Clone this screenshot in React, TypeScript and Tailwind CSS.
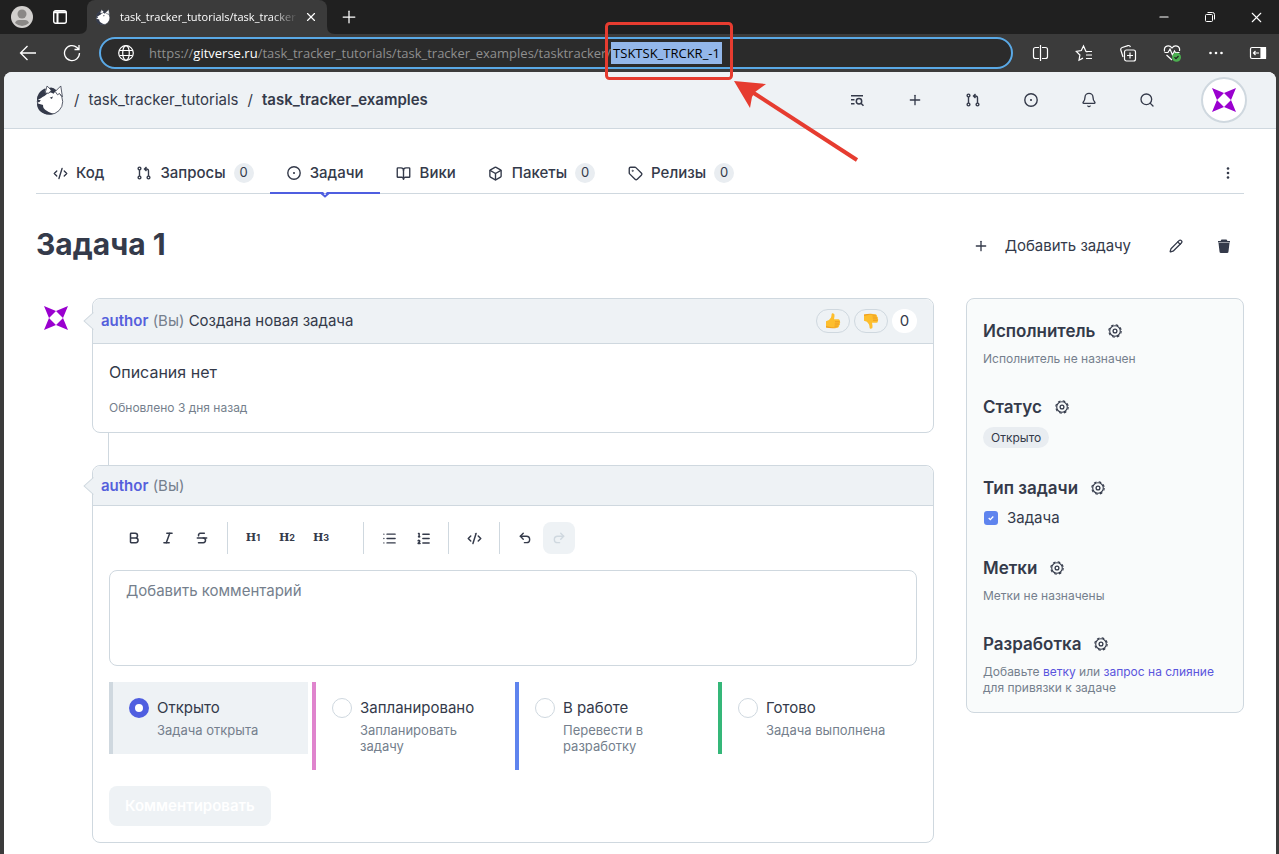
import React from 'react';
import {
  Bell,
  Bold,
  BookOpen,
  Box,
  CodeXml,
  Italic,
  List,
  ListOrdered,
  Minus,
  Pencil,
  Plus,
  Redo2,
  Search,
  Strikethrough,
  Tag,
  Undo2,
  X,
} from 'lucide-react';

const HuskyLogo: React.FC<{ className?: string }> = ({ className }) => (
  <svg viewBox="0 0 84 92" className={className} aria-hidden="true">
    <circle cx="42" cy="51" r="39" fill="#fff" stroke="#343a4a" strokeWidth="2.5" />
    <path d="M28 10C10 18 2 31 2 47l12-6c6-6 16-8 22-17l-10-2z" fill="#343a4a" />
    <path d="M38 9q13-5 23 7l-8 11q-7-6-15-5z" fill="#343a4a" />
    <path d="M27 25 33 3l13 13-7 9z" fill="#fff" stroke="#343a4a" strokeWidth="2.5" />
    <path d="M58 20 75 3l5 33-9-10-6 4z" fill="#fff" stroke="#343a4a" strokeWidth="2.5" />
    <path d="M2 56l19 5q-2 9 6 15 10 8 26 13C26 96 2 82 2 56z" fill="#343a4a" />
    <path d="M3 45l11 2-5 6H3z" fill="#343a4a" />
    <path d="M41 39l10-4-3 8z" fill="#343a4a" />
  </svg>
);

const Star: React.FC = () => (
  <svg viewBox="0 0 24 24" className="size-6" fill="#9a00cf" aria-hidden="true">
    <path d="M0 0 12 5 5 12zM24 0 12 5l7 7zM0 24l12-5-7-7zM24 24 12 19l7-7z" />
  </svg>
);

const RequestIcon: React.FC = () => (
  <svg viewBox="0 0 16 16" className="size-4" fill="none" stroke="currentColor" strokeWidth="1.4" aria-hidden="true">
    <circle cx="3.5" cy="3.5" r="1.4" />
    <circle cx="3.5" cy="12.5" r="1.4" />
    <circle cx="12.5" cy="12.5" r="1.4" />
    <path d="M3.5 5v6M12.5 11V6a2 2 0 0 0-2-2H8.5M10.5 2l-2 2 2 2" />
  </svg>
);

const IssueIcon: React.FC = () => (
  <svg viewBox="0 0 16 16" className="size-4" fill="none" stroke="currentColor" strokeWidth="1.4" aria-hidden="true">
    <circle cx="8" cy="8" r="6.2" />
    <circle cx="8" cy="8" r="1.1" fill="currentColor" stroke="none" />
  </svg>
);

const GearIcon: React.FC = () => (
  <svg viewBox="0 0 16 16" className="size-4" fill="none" stroke="currentColor" aria-hidden="true">
    <circle cx="8" cy="8" r="5.3" strokeWidth="1.1" />
    <circle cx="8" cy="8" r="6.2" strokeWidth="1.1" strokeDasharray="2.6 2.27" />
    <circle cx="8" cy="8" r="1.9" strokeWidth="1.3" />
  </svg>
);

const ListSearchIcon: React.FC = () => (
  <svg viewBox="0 0 16 16" className="size-4" fill="none" stroke="currentColor" strokeWidth="1.5" aria-hidden="true">
    <path d="M2 3.7h12M2 7.8h3.5M2 11.8h3.5" />
    <circle cx="10" cy="9.3" r="2.7" />
    <path d="m12 11.3 2.5 2.5" />
  </svg>
);

const Thumb: React.FC<{ down?: boolean }> = ({ down }) => (
  <svg viewBox="0 0 16 16" className={down ? 'size-4 rotate-180 -scale-x-100' : 'size-4'} aria-hidden="true">
    <path d="M1 8.2q3.4-.4 4.9-3.4Q6.6 3 6.6 1.3 6.8 0 8 .3q2 .5 1.5 3L9 6.2h4.6q1.7.3 1.2 1.9.9 1.1 0 2.3.5 1.3-.7 2.2 0 1.7-1.5 2.1-5 1-11.6-.5z" fill="#fdbe2d" />
    <path d="M10 8.8h4.7M9.8 11h4.3M9.5 13.1h3.4" stroke="#e38b1c" strokeWidth=".7" fill="none" />
    <path d="M1 13q5 1.500 11.500 1.700Q7 16 1 14.500z" fill="#f0a020" />
  </svg>
);

const browserActions = [
  {
    name: 'Split screen',
    icon: (
      <path d="M8 3.5H4.5a2 2 0 0 0-2 2v7a2 2 0 0 0 2 2H8M11 3.5h3.5a2 2 0 0 1 2 2v7a2 2 0 0 1-2 2H11M9.5 1v16" />
    ),
  },
  {
    name: 'Favorites',
    icon: <path d="M12.5 8 11 7.500 8.500 2 6.300 6.500l-5 .8 3.600 3.700-.9 5.200 4-2.100M11.500 7.500H17M11 11h6M11 14.500h6" />,
  },
  {
    name: 'Collections',
    icon: (
      <path d="M4 13 1.800 6a2 2 0 0 1 1.400-2.500L9 1.600a2 2 0 0 1 2.400 1.400M7.500 6h7a2 2 0 0 1 2 2v7a2 2 0 0 1-2 2h-7a2 2 0 0 1-2-2V8a2 2 0 0 1 2-2zM11 8.500v6M8 11.500h6" />
    ),
  },
  {
    name: 'Browser essentials',
    icon: (
      <>
        <path d="M1.500 7.500C.5 1.500 6.500.5 9 4c2.500-3.500 8.500-2.500 7.500 3M1.500 8.500H5L7 5l2.500 6 2-4 1 1.500h4M3.500 11 9 16" />
        <circle cx="13.5" cy="13.2" r="4.5" fill="#4caf50" stroke="none" />
        <path d="m11.500 13.300 1.500 1.400 2.500-2.700" stroke="#202020" />
      </>
    ),
  },
  {
    name: 'Settings and more',
    icon: (
      <g fill="currentColor" stroke="none">
        <circle cx="3.5" cy="9" r="1.3" />
        <circle cx="9" cy="9" r="1.3" />
        <circle cx="14.5" cy="9" r="1.3" />
      </g>
    ),
  },
  {
    name: 'Hide sidebar',
    icon: (
      <>
        <rect x="1.5" y="3.5" width="15" height="11" rx="1.5" />
        <path d="M12 3.5h4.5v11H12z" fill="currentColor" />
        <path d="M10 9H4.500M6.500 7l-2 2 2 2" />
      </>
    ),
  },
];

const tabs = [
  { title: 'Код', icon: <CodeXml size={15} strokeWidth={2.2} /> },
  { title: 'Запросы', icon: <RequestIcon />, count: 0 },
  { title: 'Задачи', icon: <IssueIcon />, active: true },
  { title: 'Вики', icon: <BookOpen size={15} strokeWidth={2.2} /> },
  { title: 'Пакеты', icon: <Box size={15} strokeWidth={2.2} />, count: 0 },
  { title: 'Релизы', icon: <Tag size={15} strokeWidth={2.2} />, count: 0 },
];

const headerActions = [
  { name: 'Список', icon: <ListSearchIcon /> },
  { name: 'Создать', icon: <Plus size={16} /> },
  { name: 'Запросы', icon: <RequestIcon /> },
  { name: 'Задачи', icon: <IssueIcon /> },
  { name: 'Уведомления', icon: <Bell size={16} /> },
  { name: 'Поиск', icon: <Search size={16} /> },
];

const statuses = [
  { title: 'Открыто', text: 'Задача открыта', style: 'border-[#cfd8df] bg-[#eef2f5]', checked: true },
  { title: 'Запланировано', text: 'Запланировать задачу', style: 'border-[#df84cd]' },
  { title: 'В работе', text: 'Перевести в разработку', style: 'border-[#5f84ee]' },
  { title: 'Готово', text: 'Задача выполнена', style: 'border-[#35b779]' },
];

const BrowserBar: React.FC = () => (
  <div className="text-white">
    <div className="flex h-[34px] items-center bg-[#202020]">
      <button className="ml-[11px]" aria-label="Profile">
        <svg viewBox="0 0 22 22" className="size-[22px]">
          <circle cx="11" cy="11" r="11" fill="#d2d0ce" />
          <circle cx="11" cy="8" r="4.5" fill="#8a8886" />
          <path d="M4 17q1-3 4-3h6q3 0 4 3-7 6-14 0z" fill="#8a8886" />
        </svg>
      </button>
      <button className="ml-5" aria-label="Tab actions">
        <svg viewBox="0 0 14 14" className="size-[14px]" fill="none" stroke="currentColor" strokeWidth="1.4">
          <rect x=".7" y=".7" width="12.6" height="12.6" rx="2" />
          <path d="M1 2.300h12M4.500 3v10" strokeWidth="2" />
        </svg>
      </button>
      <svg viewBox="0 0 8 8" className="ml-3 size-2 self-end" fill="#3b3b3b">
        <path d="M8 0v8H0q8 0 8-8z" />
      </svg>
      <div className="flex h-full w-[240px] items-center rounded-t-lg bg-[#3b3b3b] px-2">
        <HuskyLogo className="size-4" />
        <span className="ml-[9px] w-[178px] whitespace-nowrap font-['Open_Sans'] text-[11px] mask-r-from-85%">
          task_tracker_tutorials/task_tracker
        </span>
        <button className="ml-[6px]" aria-label="Close tab">
          <X size={14} strokeWidth={2} />
        </button>
      </div>
      <svg viewBox="0 0 8 8" className="size-2 self-end" fill="#3b3b3b">
        <path d="M0 0v8h8Q0 8 0 0z" />
      </svg>
      <button className="ml-1" aria-label="New tab">
        <Plus size={20} strokeWidth={1.5} />
      </button>
      <div className="ml-auto flex items-center">
        <button className="flex w-[46px] justify-center" aria-label="Minimize">
          <Minus size={14} strokeWidth={2} />
        </button>
        <button className="flex w-[46px] justify-center" aria-label="Restore">
          <svg viewBox="0 0 10 10" className="size-[10px]" fill="none" stroke="currentColor">
            <rect x=".5" y="2.5" width="7" height="7" rx="1" />
            <path d="M2.500.5h5a2 2 0 0 1 2 2v5" />
          </svg>
        </button>
        <button className="flex w-[46px] justify-center" aria-label="Close">
          <X size={17} strokeWidth={1.5} />
        </button>
      </div>
    </div>

    <div className="flex h-[38px] items-center bg-[#3b3b3b]">
      <button className="ml-[19px]" aria-label="Back">
        <svg viewBox="0 0 18 18" className="size-[18px]" fill="none" stroke="currentColor" strokeWidth="1.3">
          <path d="M17 9H1.500M8.500 2l-7 7 7 7" />
        </svg>
      </button>
      <button className="ml-[26px]" aria-label="Reload">
        <svg viewBox="0 0 18 18" className="size-[18px]" fill="none" stroke="currentColor" strokeWidth="1.3">
          <path d="M16.500 9A7.500 7.500 0 1 1 14 3.500l1.500 1.500M16 1v4.500h-4.500" />
        </svg>
      </button>
      <div className="ml-[18px] flex h-8 flex-1 items-center rounded-full border-2 border-[#5aa9e6] bg-[#2b2b2b]">
        <svg viewBox="0 0 16 16" className="ml-[17px] size-4" fill="none" stroke="currentColor" strokeWidth="1.2">
          <circle cx="8" cy="8" r="7.3" />
          <ellipse cx="8" cy="8" rx="3.3" ry="7.3" />
          <path d="M1.500 5.500h13M1.500 10.500h13" />
        </svg>
        <div className="ml-[15px] whitespace-nowrap font-['Open_Sans'] text-[13px] leading-[22px] text-[#8f8f8f]" role="textbox" aria-label="Address">
          https://<span className="text-white">gitverse.ru</span>
          /task_tracker_tutorials/task_tracker_examples/tasktracker/
          <span className="inline-block bg-[#93b7ea] px-[2px] text-black">TSKTSK_TRCKR_-1</span>
        </div>
      </div>
      <div className="ml-[5px] flex">
        {browserActions.map((action) => (
          <button key={action.name} className="flex w-11 justify-center last:w-[39px]" aria-label={action.name}>
            <svg viewBox="0 0 18 18" className="size-[18px]" fill="none" stroke="currentColor" strokeWidth="1.2">
              {action.icon}
            </svg>
          </button>
        ))}
      </div>
      <span className="w-[2px]" />
    </div>
  </div>
);

const RepoHeader: React.FC = () => (
  <header className="flex h-[57px] items-center border-b border-[#cfd8df] bg-[#eef2f5] pl-8 pr-[29px]">
    <HuskyLogo className="h-[30px] w-7" />
    <div className="ml-[10px] flex gap-[9px] text-[15px]">
      <span>/</span>
      <a href="#owner">task_tracker_tutorials</a>
      <span>/</span>
      <a href="#repo" className="font-semibold">task_tracker_examples</a>
    </div>
    <div className="ml-auto flex">
      {headerActions.map((action) => (
        <button key={action.name} className="flex w-[58px] justify-center" aria-label={action.name}>
          {action.icon}
        </button>
      ))}
    </div>
    <button className="ml-[25px] flex size-[46px] items-center justify-center rounded-full border-2 border-[#cfd8df] bg-white" aria-label="Профиль">
      <Star />
    </button>
  </header>
);

const RepoTabs: React.FC = () => (
  <nav className="flex h-[65px] items-end border-b border-[#cfd8df]">
    {tabs.map((tab) => (
      <a key={tab.title} href="#tab" className="relative -mb-px flex h-[43px] items-center gap-2 px-4 pt-px text-[15px] font-medium">
        <span className="flex size-4 items-center justify-center">{tab.icon}</span>
        {tab.title}
        {tab.count !== undefined && (
          <span className="flex size-5 items-center justify-center rounded-full bg-[#e9edf1] text-[13px] font-normal">{tab.count}</span>
        )}
        {tab.active && (
          <span className="absolute inset-x-0 bottom-0 h-[2px] bg-[#4f5ee0]">
            <svg viewBox="0 0 12 6" className="absolute left-1/2 top-0 h-[6px] w-3 -translate-x-1/2">
              <path d="M1 0h10L8 0 6 2 4 0z" fill="#fff" />
              <path d="M0 1h2l4 3.500L10 1h2" fill="none" stroke="#4f5ee0" strokeWidth="2" />
            </svg>
          </span>
        )}
      </a>
    ))}
    <button className="mb-3 ml-auto mr-2 flex size-4 items-center justify-center" aria-label="Ещё">
      <svg viewBox="0 0 16 16" className="size-4" fill="currentColor">
        <circle cx="8" cy="3.5" r="1.3" />
        <circle cx="8" cy="8" r="1.3" />
        <circle cx="8" cy="12.5" r="1.3" />
      </svg>
    </button>
  </nav>
);

const CardPointer: React.FC = () => (
  <svg viewBox="0 0 10 18" className="absolute -left-[10px] top-1/2 h-[18px] w-[11px] -translate-y-1/2" preserveAspectRatio="none">
    <path d="M10 0 1 9l9 9z" fill="#eef2f5" />
    <path d="M9.500.5 1 9l8.500 8.500" fill="none" stroke="#cfd8df" />
  </svg>
);

const ToolButton: React.FC<{ name: string; disabled?: boolean; children: React.ReactNode }> = ({ name, disabled, children }) => (
  <button
    aria-label={name}
    disabled={disabled}
    className="flex size-8 items-center justify-center rounded-lg disabled:bg-[#eef2f5] disabled:text-[#cfd8df]"
  >
    {children}
  </button>
);

const HeadingMark: React.FC<{ level: number }> = ({ level }) => (
  <span className="flex items-baseline font-['DejaVu_Serif'] text-[11px] leading-4 font-bold">
    H<span className="font-['Inter'] text-[9px]">{level}</span>
  </span>
);

const Toolbar: React.FC = () => (
  <div className="flex">
    <div className="flex gap-[2px] border-r border-[#cfd8df] px-[9px]">
      <ToolButton name="Жирный"><Bold size={14} strokeWidth={2.6} /></ToolButton>
      <ToolButton name="Курсив"><Italic size={14} strokeWidth={2.6} /></ToolButton>
      <ToolButton name="Зачёркнутый"><Strikethrough size={14} strokeWidth={2.6} /></ToolButton>
    </div>
    <div className="flex gap-[2px] border-r border-[#cfd8df] pl-[9px] pr-[26px]">
      <ToolButton name="Заголовок первого уровня"><HeadingMark level={1} /></ToolButton>
      <ToolButton name="Заголовок второго уровня"><HeadingMark level={2} /></ToolButton>
      <ToolButton name="Заголовок третьего уровня"><HeadingMark level={3} /></ToolButton>
    </div>
    <div className="flex gap-[2px] border-r border-[#cfd8df] px-[9px]">
      <ToolButton name="Список"><List size={15} strokeWidth={2.2} /></ToolButton>
      <ToolButton name="Нумерованный список"><ListOrdered size={15} strokeWidth={2.4} /></ToolButton>
    </div>
    <div className="flex border-r border-[#cfd8df] px-[9px]">
      <ToolButton name="Код"><CodeXml size={15} strokeWidth={2.4} /></ToolButton>
    </div>
    <div className="flex gap-[2px] px-[9px]">
      <ToolButton name="Отменить"><Undo2 size={14} strokeWidth={2.4} /></ToolButton>
      <ToolButton name="Повторить" disabled><Redo2 size={14} strokeWidth={2.4} /></ToolButton>
    </div>
  </div>
);

const SideSection: React.FC<{ title: string; children: React.ReactNode }> = ({ title, children }) => (
  <section className="flex flex-col items-start gap-2 text-xs leading-4 text-[#757f8d]">
    <h2 className="flex items-center gap-3 text-[17px] leading-6 font-semibold text-[#343a4a]">
      {title}
      <button aria-label={`Изменить: ${title}`}><GearIcon /></button>
    </h2>
    {children}
  </section>
);

const Sidebar: React.FC = () => (
  <aside className="flex w-[278px] shrink-0 flex-col gap-7 self-start rounded-lg border border-[#cfd8df] bg-[#f9fbfb] px-4 pb-4 pt-5">
    <SideSection title="Исполнитель">
      <p>Исполнитель не назначен</p>
    </SideSection>
    <SideSection title="Статус">
      <span className="rounded-full bg-[#e9edf1] px-2 leading-[21px] text-[#343a4a]">Открыто</span>
    </SideSection>
    <SideSection title="Тип задачи">
      <label className="flex items-center gap-[9px] pl-px text-[15px] leading-5 text-[#343a4a]">
        <span className="grid">
          <input type="checkbox" defaultChecked className="col-start-1 row-start-1 size-[14px] appearance-none rounded-[3px] bg-[#5f84ee]" />
          <svg viewBox="0 0 14 14" className="pointer-events-none col-start-1 row-start-1 size-[14px]" fill="none" stroke="#fff" strokeWidth="1.3">
            <path d="m4.700 7 1.600 1.600 3-3.100" />
          </svg>
        </span>
        Задача
      </label>
    </SideSection>
    <SideSection title="Метки">
      <p>Метки не назначены</p>
    </SideSection>
    <SideSection title="Разработка">
      <p>
        Добавьте <a href="#branch" className="text-[#5a55dd]">ветку</a> или{' '}
        <a href="#merge" className="text-[#5a55dd]">запрос на слияние</a>
        <br />
        для привязки к задаче
      </p>
    </SideSection>
  </aside>
);

const Author: React.FC = () => (
  <>
    <a href="#author" className="font-semibold text-[#5560dc]">author</a>{' '}
    <span className="text-[#757f8d]">(Вы)</span>
  </>
);

const Thread: React.FC = () => (
  <div className="min-w-0 flex-1">
    <article className="rounded-lg border border-[#cfd8df]">
      <div className="relative flex h-[45px] items-center rounded-t-lg border-b border-[#cfd8df] bg-[#eef2f5] pl-2 pr-4">
        <CardPointer />
        <p><Author /> Создана новая задача</p>
        <div className="ml-auto flex gap-1">
          <button className="flex h-6 w-[34px] items-center justify-center rounded-full border border-[#cfd8df]" aria-label="Нравится">
            <Thumb />
          </button>
          <button className="flex h-6 w-[34px] items-center justify-center rounded-full border border-[#cfd8df]" aria-label="Не нравится">
            <Thumb down />
          </button>
          <span className="flex h-6 w-[25px] items-center justify-center rounded-full bg-white">0</span>
        </div>
      </div>
      <div className="p-4">
        <p className="text-base leading-6">Описания нет</p>
        <p className="mt-4 text-xs leading-4 text-[#757f8d]">Обновлено 3 дня назад</p>
      </div>
    </article>

    <div className="ml-4 h-8 border-l border-[#cfd8df]" />

    <form className="rounded-lg border border-[#cfd8df]" onSubmit={(e) => e.preventDefault()}>
      <div className="relative flex h-10 items-center rounded-t-lg border-b border-[#cfd8df] bg-[#eef2f5] px-2 pt-[2px]">
        <CardPointer />
        <p><Author /></p>
      </div>
      <div className="flex flex-col gap-4 p-4">
        <Toolbar />
        <textarea
          aria-label="Комментарий"
          placeholder="Добавить комментарий"
          className="block h-24 w-full resize-none rounded-lg border border-[#cfd8df] px-4 py-2 leading-6 placeholder:text-[#757f8d]"
        />
        <div className="grid grid-cols-4 items-start gap-1">
          {statuses.map((status) => (
            <label key={status.title} className={`flex gap-2 border-l-4 p-4 ${status.style}`}>
              <input
                type="radio"
                name="status"
                defaultChecked={status.checked}
                className="size-5 shrink-0 appearance-none rounded-full border border-[#cfd8df] bg-white checked:border-6 checked:border-[#4f5ee0]"
              />
              <span>
                <span className="block leading-5">{status.title}</span>
                <span className="mt-1 block text-[13px] leading-4 text-[#757f8d]">{status.text}</span>
              </span>
            </label>
          ))}
        </div>
        <button disabled className="h-10 self-start rounded-lg bg-[#eef2f5] px-4 font-semibold text-white">
          Комментировать
        </button>
      </div>
    </form>
  </div>
);

// red frame around the task id in the address bar, with an arrow to it
const Callout: React.FC = () => (
  <svg viewBox="0 0 260 150" className="pointer-events-none absolute left-[602px] top-[18px] h-[150px] w-[260px]" fill="none" aria-hidden="true">
    <rect x="4.5" y="5.5" width="125" height="55" rx="3" stroke="#e63c30" strokeWidth="3" />
    <path d="M147 72 255 142" stroke="#e63c30" strokeWidth="4" />
    <path d="m132 63 32 3-11 8-3 5-2 11z" fill="#e63c30" />
  </svg>
);

const App: React.FC = () => {
  return (
    <div className="relative flex min-h-screen flex-col bg-[#3b3b3b] font-['Inter',sans-serif] text-[15px] text-[#343a4a]">
      <BrowserBar />
      <div className="ml-1 mr-[3px] flex-1 overflow-hidden rounded-t-lg bg-white">
        <RepoHeader />
        <main className="px-8 pb-[11px]">
          <RepoTabs />
          <div className="flex items-center justify-between pt-[30px]">
            <h1 className="text-[30px] leading-10 font-bold">Задача 1</h1>
            <div className="flex items-center pr-3 pt-1">
              <button className="flex items-center gap-4 font-normal">
                <Plus size={16} />
                Добавить задачу
              </button>
              <button className="ml-[38px]" aria-label="Редактировать"><Pencil size={14} strokeWidth={2.2} /></button>
              <button className="ml-[33px]" aria-label="Удалить">
                <svg viewBox="0 0 16 16" className="size-4" fill="currentColor">
                  <path d="M5.500 1.500h5L11.500 3H14v1.500H2V3h2.500zM2.500 5h11l-1 8.500a1.500 1.500 0 0 1-1.500 1.500H5a1.500 1.500 0 0 1-1.500-1.500z" />
                </svg>
              </button>
            </div>
          </div>
          <div className="flex pt-[34px]">
            <div className="mr-4 flex size-10 shrink-0 items-center justify-center"><Star /></div>
            <Thread />
            <div className="ml-8 flex"><Sidebar /></div>
          </div>
        </main>
      </div>
      <Callout />
    </div>
  );
};

export default App;
